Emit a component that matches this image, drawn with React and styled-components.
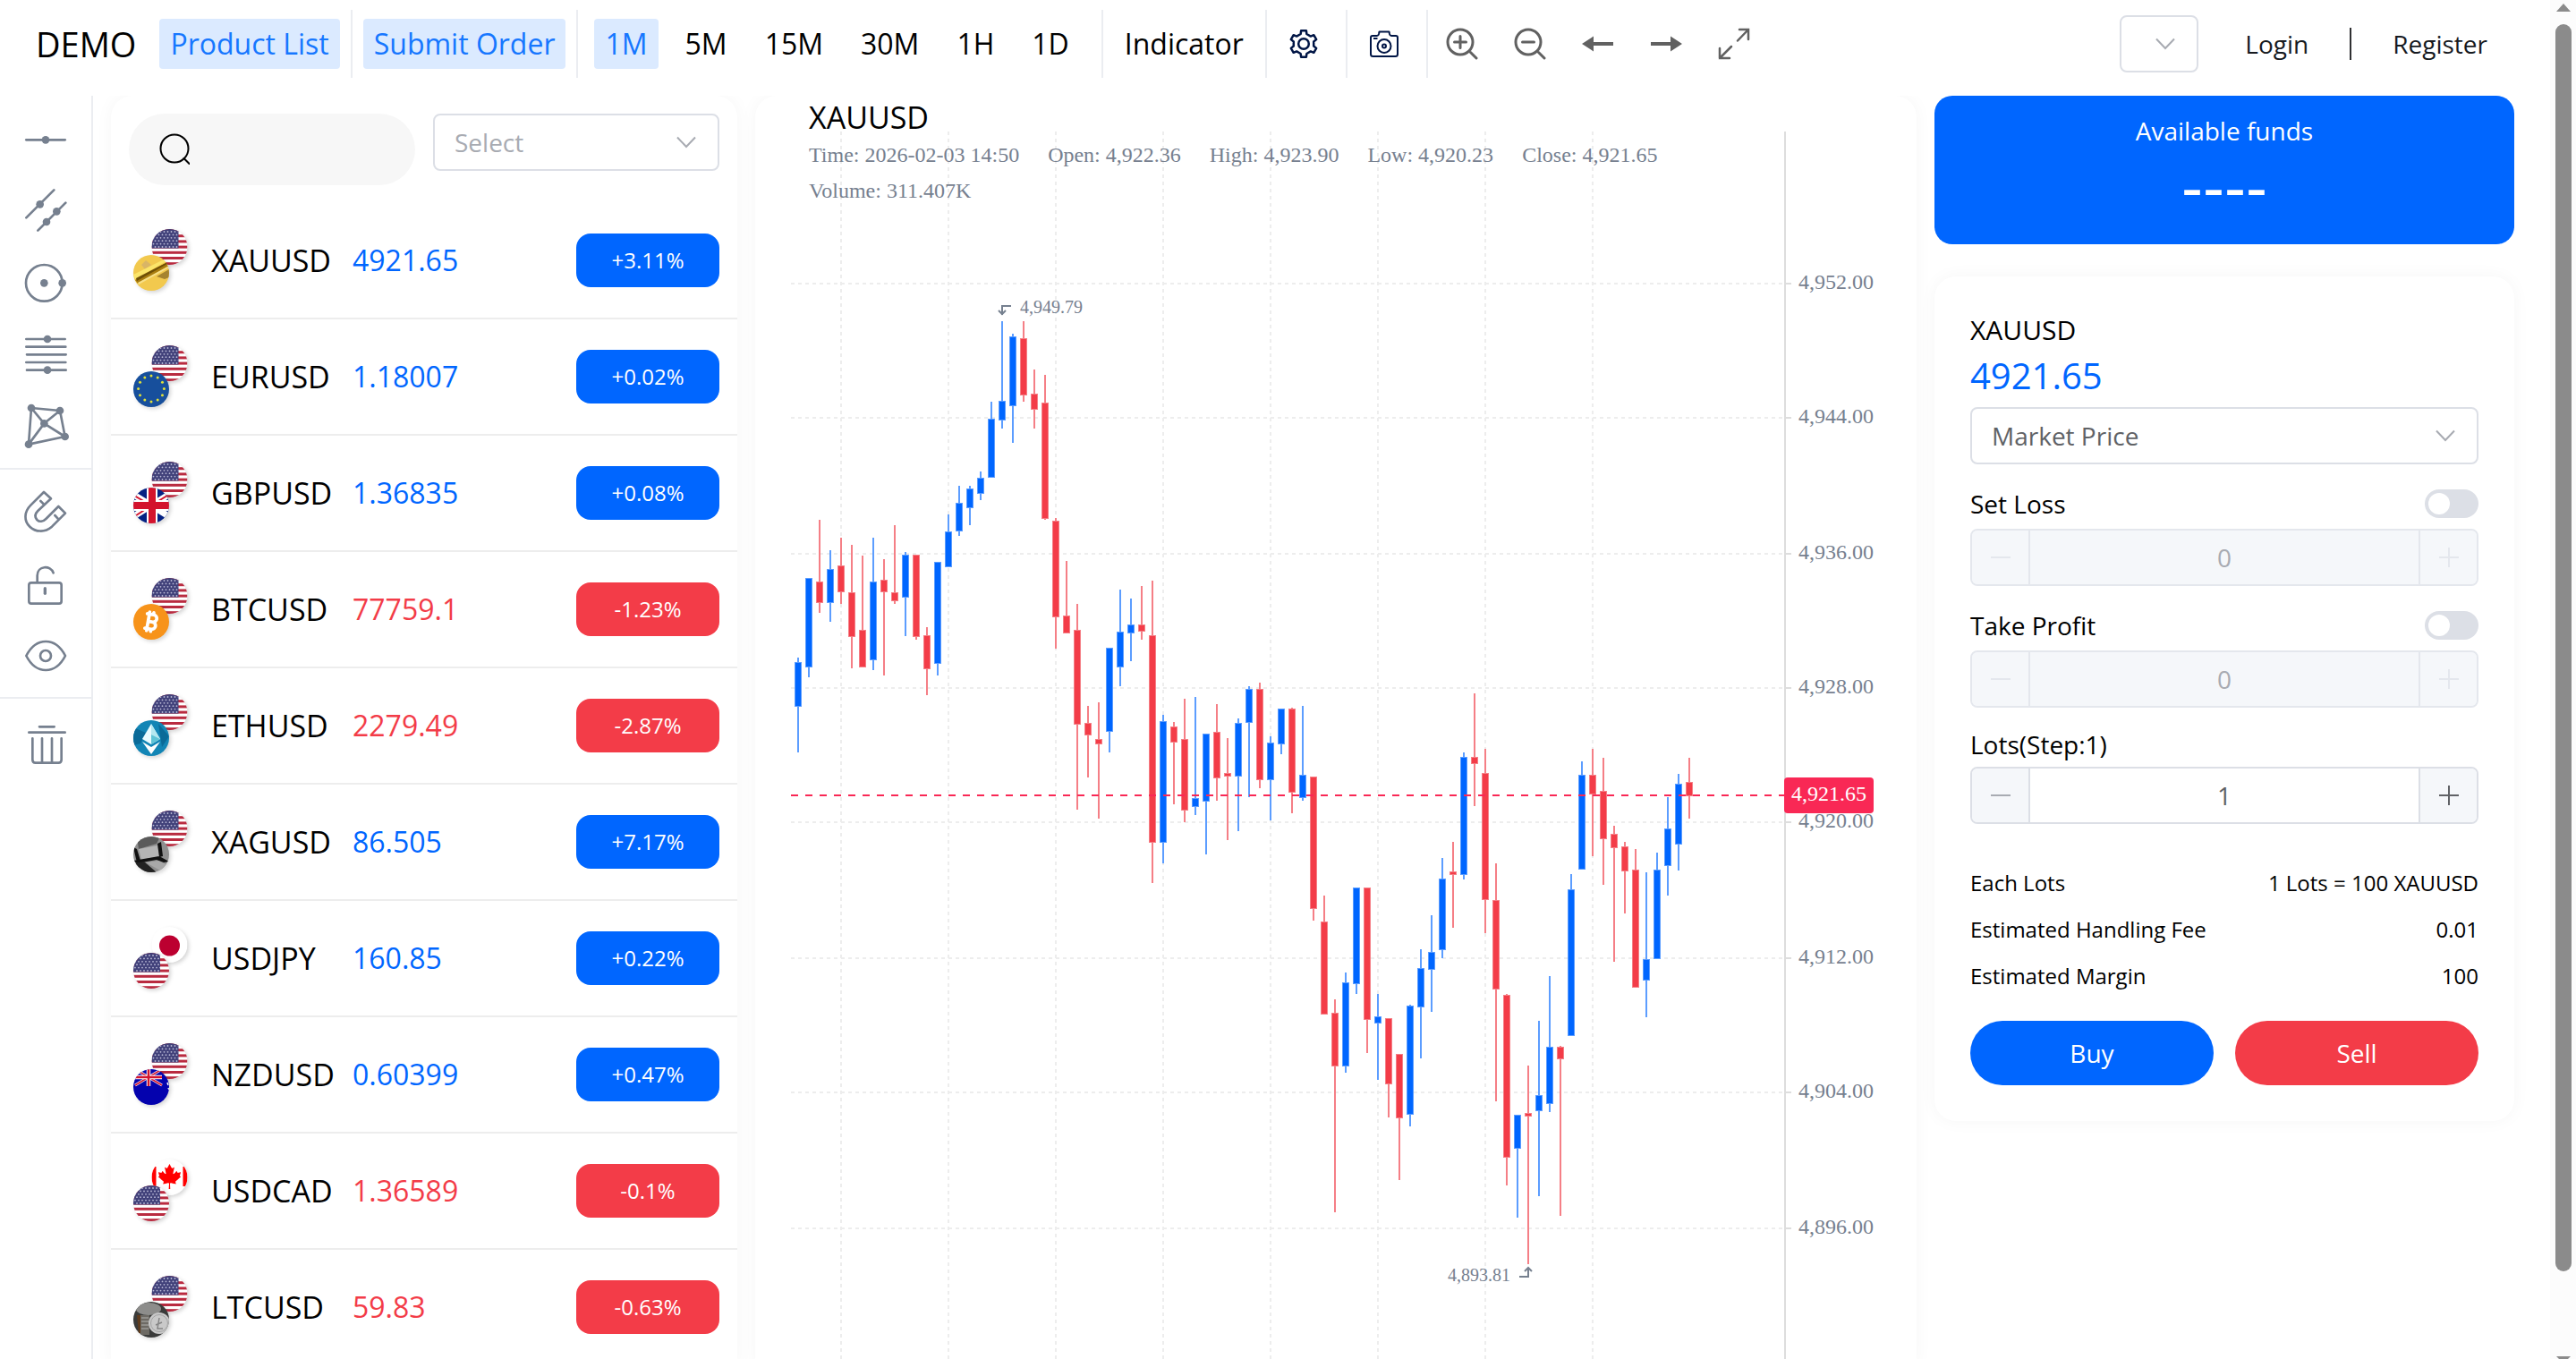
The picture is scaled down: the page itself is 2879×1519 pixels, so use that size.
import React, { useState } from 'react';
import styled, { createGlobalStyle } from 'styled-components';
import { Bitcoin } from 'lucide-react';
import { FaCanadianMapleLeaf } from 'react-icons/fa';

const blue = '#0066ff';
const red = '#f33c48';
const slate = '#76808f';

const GlobalStyle = createGlobalStyle`
  * {
    box-sizing: border-box;
  }

  body {
    margin: 0;
    background: #fff;
    color: #000;
    font-family: "Segoe UI", "Open Sans", "Noto Sans", sans-serif;
    font-size: 28px;
    line-height: 42px;
  }

  button, input, select {
    font: inherit;
    color: inherit;
    margin: 0;
  }

  button {
    border: 0;
    padding: 0;
    background: none;
    cursor: pointer;
  }

  svg {
    display: block;
  }
`;

const Shell = styled.div`
  display: flex;
  height: 100vh;
  overflow: hidden;
`;

const Page = styled.div`
  flex: 1;
  min-width: 0;
  display: flex;
  flex-direction: column;
`;

/* header */

const Header = styled.header`
  display: flex;
  align-items: center;
  flex: none;
  height: 107px;
  padding: 0 70px 10px 40px;
`;

const Brand = styled.div`
  font-size: 38px;
  margin-right: 26px;
`;

const Group = styled.div`
  display: flex;
  align-items: center;
  gap: ${props => props.$gap || 0}px;
  height: 76px;
  padding-left: ${props => props.$start || 0}px;
  padding-right: ${props => props.$end || 0}px;
  border-right: ${props => (props.$last ? 0 : '2px')} solid #ebedf1;
`;

const Tab = styled.button`
  height: 56px;
  padding: 0 12px;
  border-radius: 4px;
  font-size: 32px;
  white-space: nowrap;
  color: ${props => (props.$active ? '#1677ff' : '#000')};
  background: ${props => (props.$active ? '#dbeaff' : 'transparent')};
`;

const IconButton = styled.button`
  display: flex;
  align-items: center;
  justify-content: center;
  color: ${props => props.$color || '#616161'};
`;

const Account = styled.nav`
  display: flex;
  align-items: center;
  margin-left: auto;
  color: #171a1f;
`;

const AccountLink = styled.a`
  color: inherit;
  text-decoration: none;
`;

const AccountBar = styled.span`
  width: 2px;
  height: 36px;
  margin: 0 46px;
  background: #303133;
`;

/* selects */

const SelectWrap = styled.div`
  display: grid;
  grid-template-columns: minmax(0, 1fr);
  align-items: center;
  min-width: 0;
  width: ${props => props.$width || 'auto'};
  margin-right: ${props => props.$right || 0}px;
  color: #a8abb2;

  > * {
    grid-area: 1 / 1;
  }

  > svg {
    justify-self: end;
    margin-right: 26px;
    pointer-events: none;
  }
`;

const SelectBox = styled.select`
  appearance: none;
  width: 100%;
  height: 64px;
  padding: 0 24px 0 22px;
  border: 2px solid #dcdfe6;
  border-radius: 8px;
  background: #fff;
  color: ${props => props.$color || '#606266'};
`;

/* body */

const Body = styled.div`
  flex: 1;
  min-height: 0;
  display: flex;
  overflow: hidden;
`;

const DrawBar = styled.aside`
  flex: none;
  width: 104px;
  padding-top: 9px;
  border-right: 2px solid #ebedf1;
  color: ${slate};
`;

const DrawRule = styled.hr`
  height: 2px;
  margin: 7px 0;
  border: 0;
  background: #ebedf1;
`;

const Columns = styled.main`
  flex: 1;
  min-width: 0;
  display: grid;
  grid-template-columns: 700px minmax(0, 1fr) 648px;
  gap: 20px;
  padding: 0 40px 0 20px;
`;

const Panel = styled.section`
  border-radius: 24px 24px 0 0;
  background: #fff;
  box-shadow: 0 0 20px rgba(0, 0, 0, 0.04);
`;

const Filters = styled.div`
  display: grid;
  grid-template-columns: 1fr 1fr;
  align-items: start;
  gap: 20px;
  padding: 20px;
`;

const Search = styled.label`
  display: flex;
  align-items: center;
  gap: 16px;
  min-width: 0;
  height: 80px;
  padding: 0 32px;
  border-radius: 40px;
  background: #f7f7f7;

  input {
    flex: 1;
    min-width: 0;
    border: 0;
    outline: 0;
    background: none;
  }
`;

const List = styled.ul`
  margin: 0;
  padding: 0;
  list-style: none;
`;

const Row = styled.li`
  display: grid;
  grid-template-columns: 87px 158px 1fr 160px;
  align-items: center;
  height: 130px;
  padding: 0 20px 0 25px;
  border-bottom: 2px solid #ededed;
  font-size: 34px;
`;

const Price = styled.span`
  color: ${props => (props.$down ? red : blue)};
  font-size: 32px;
`;

const Change = styled.span`
  height: 60px;
  border-radius: 16px;
  background: ${props => (props.$down ? red : blue)};
  color: #fff;
  font-size: 24px;
  line-height: 60px;
  text-align: center;
`;

/* chart */

const ChartPanel = styled(Panel)`
  display: grid;
  grid-template-rows: 40px 1fr;
  padding-left: 40px;
  overflow: hidden;
`;

const ChartTitle = styled.h1`
  margin: 0;
  padding: 4px 20px;
  font-size: 34px;
  font-weight: 400;
  line-height: 40px;
  white-space: nowrap;
`;

const ChartStage = styled.div`
  display: grid;
  align-items: start;

  > * {
    grid-area: 1 / 1;
  }

  > svg {
    font-family: "Liberation Serif", "Times New Roman", serif;
  }
`;

const Legend = styled.div`
  display: flex;
  flex-wrap: wrap;
  column-gap: 32px;
  max-width: 1110px;
  padding: 6px 20px;
  color: ${slate};
  font: 24px/40px "Liberation Serif", "Times New Roman", serif;
`;

/* order form */

const Side = styled.div`
  min-width: 0;
`;

const Funds = styled.section`
  height: 166px;
  padding-top: 18px;
  border-radius: 20px;
  background: ${blue};
  color: #fff;
  text-align: center;
`;

const FundsValue = styled.div`
  margin-top: 4px;
  font: 72px/76px "Liberation Sans", Arial, sans-serif;
`;

const Order = styled.form`
  margin-top: 36px;
  padding: 40px;
  border-radius: 24px;
  background: #fff;
  box-shadow: 0 0 20px rgba(0, 0, 0, 0.04);
`;

const OrderName = styled.div`
  font-size: 30px;
  line-height: 40px;
`;

const OrderPrice = styled.div`
  margin-bottom: 4px;
  color: ${blue};
  font-size: 40px;
  line-height: 62px;
`;

const FieldHead = styled.div`
  display: flex;
  align-items: center;
  justify-content: space-between;
  height: ${props => (props.$plain ? 42 : 48)}px;
  margin: 20px 0 4px;
`;

const Switch = styled.input`
  appearance: none;
  width: 60px;
  height: 32px;
  padding: 4px;
  border-radius: 16px;
  background: ${props => (props.checked ? blue : '#dcdfe6')};
  cursor: pointer;

  &::before {
    content: '';
    display: block;
    width: 24px;
    height: 24px;
    margin-left: ${props => (props.checked ? 28 : 0)}px;
    border-radius: 12px;
    background: #fff;
  }
`;

const Stepper = styled.div`
  display: flex;
  height: 64px;
  border: 2px solid ${props => (props.$off ? '#e4e7ed' : '#dcdfe6')};
  border-radius: 8px;
  overflow: hidden;
  background: ${props => (props.$off ? '#f5f7fa' : '#fff')};

  input {
    flex: 1;
    min-width: 0;
    border: 2px solid ${props => (props.$off ? '#e4e7ed' : '#dcdfe6')};
    border-width: 0 2px;
    outline: 0;
    background: none;
    color: ${props => (props.$off ? '#a8abb2' : '#606266')};
    text-align: center;
  }
`;

const StepButton = styled.button`
  display: flex;
  align-items: center;
  justify-content: center;
  width: 63px;
  background: #f5f7fa;
  color: ${props => props.$color};
`;

const Facts = styled.dl`
  margin: 40px 0 24px;
  font-size: 24px;
  line-height: 52px;
`;

const Fact = styled.div`
  display: flex;
  justify-content: space-between;

  dd {
    margin: 0;
  }
`;

const Actions = styled.div`
  display: grid;
  grid-template-columns: 1fr 1fr;
  gap: 24px;
`;

const Trade = styled.button`
  height: 72px;
  border-radius: 36px;
  background: ${props => (props.$sell ? red : blue)};
  color: #fff;
`;

/* scroll rail */

const Rail = styled.div`
  flex: none;
  display: flex;
  flex-direction: column;
  align-items: center;
  width: 29px;
  padding-top: 4px;
  background: #fcfcfc;
  color: #8b8b8b;
`;

const Thumb = styled.div`
  width: 18px;
  height: 92%;
  margin: 14px 0 auto;
  border-radius: 9px;
  background: #8b8b8b;
`;

const products = [
  { name: 'XAUUSD', price: '4921.65', change: '+3.11%', top: 'us', bottom: 'gold' },
  { name: 'EURUSD', price: '1.18007', change: '+0.02%', top: 'us', bottom: 'eu' },
  { name: 'GBPUSD', price: '1.36835', change: '+0.08%', top: 'us', bottom: 'gb' },
  { name: 'BTCUSD', price: '77759.1', change: '-1.23%', top: 'us', bottom: 'btc' },
  { name: 'ETHUSD', price: '2279.49', change: '-2.87%', top: 'us', bottom: 'eth' },
  { name: 'XAGUSD', price: '86.505', change: '+7.17%', top: 'us', bottom: 'silver' },
  { name: 'USDJPY', price: '160.85', change: '+0.22%', top: 'jp', bottom: 'us' },
  { name: 'NZDUSD', price: '0.60399', change: '+0.47%', top: 'us', bottom: 'nz' },
  { name: 'USDCAD', price: '1.36589', change: '-0.1%', top: 'ca', bottom: 'us' },
  { name: 'LTCUSD', price: '59.83', change: '-0.63%', top: 'us', bottom: 'ltc' },
];

const intervals = ['1M', '5M', '15M', '30M', '1H', '1D'];

const legend = [
  'Time: 2026-02-03 14:50',
  'Open: 4,922.36',
  'High: 4,923.90',
  'Low: 4,920.23',
  'Close: 4,921.65',
  'Volume: 311.407K',
];

// up flag, then wick top, body top, body bottom, wick bottom
const candles = [
  [1, 735, 740, 790, 841], [1, 646, 646, 746, 757], [0, 581, 650, 674, 685], [1, 615, 636, 674, 695],
  [0, 601, 632, 662, 675], [0, 609, 662, 712, 747], [0, 621, 704, 746, 746], [1, 601, 650, 738, 749],
  [0, 625, 648, 662, 755], [0, 587, 662, 672, 675], [1, 617, 620, 668, 711], [0, 620, 620, 712, 715],
  [0, 701, 710, 748, 777], [1, 628, 628, 742, 755], [1, 575, 594, 634, 634], [1, 543, 562, 594, 599],
  [1, 543, 546, 568, 587], [1, 527, 534, 552, 559], [1, 449, 468, 534, 534], [1, 359, 448, 470, 479],
  [1, 373, 376, 454, 495], [0, 359, 378, 442, 449], [0, 413, 440, 458, 479], [0, 419, 450, 580, 581],
  [0, 579, 582, 690, 725], [0, 627, 688, 708, 708], [0, 675, 704, 810, 905], [0, 789, 808, 822, 869],
  [0, 785, 826, 832, 915], [1, 724, 724, 818, 841], [1, 659, 706, 746, 767], [1, 669, 698, 708, 739],
  [0, 655, 698, 706, 715], [0, 649, 710, 942, 987], [1, 799, 806, 942, 965], [0, 807, 812, 830, 899],
  [0, 781, 826, 906, 919], [1, 779, 892, 902, 911], [1, 820, 820, 896, 955], [0, 787, 818, 870, 895],
  [0, 825, 864, 868, 939], [1, 803, 808, 868, 929], [1, 767, 770, 808, 891], [0, 763, 770, 872, 881],
  [1, 823, 830, 872, 917], [1, 792, 792, 832, 843], [0, 791, 792, 886, 909], [1, 789, 866, 892, 895],
  [0, 868, 868, 1016, 1029], [0, 1001, 1030, 1134, 1134], [0, 1117, 1132, 1192, 1355], [1, 1087, 1098, 1192, 1199],
  [1, 992, 992, 1100, 1111], [0, 992, 992, 1140, 1177], [1, 1111, 1136, 1144, 1207], [0, 1138, 1138, 1212, 1249],
  [0, 1178, 1178, 1250, 1319], [1, 1123, 1124, 1246, 1259], [1, 1061, 1082, 1126, 1183], [1, 1023, 1064, 1084, 1131],
  [1, 959, 982, 1062, 1071], [0, 941, 974, 978, 1037], [1, 841, 846, 978, 983], [0, 775, 846, 854, 901],
  [0, 837, 864, 1006, 1043], [0, 965, 1006, 1106, 1231], [0, 1111, 1112, 1294, 1325], [1, 1246, 1246, 1284, 1361],
  [0, 1191, 1244, 1248, 1413], [1, 1141, 1224, 1242, 1337], [1, 1091, 1170, 1234, 1243], [0, 1169, 1170, 1184, 1359],
  [1, 977, 994, 1158, 1158], [1, 851, 866, 972, 972], [0, 837, 866, 888, 957], [0, 847, 884, 938, 989],
  [0, 923, 932, 948, 1075], [0, 941, 946, 974, 1021], [0, 949, 972, 1104, 1104], [1, 975, 1072, 1096, 1137],
  [1, 953, 972, 1072, 1072], [1, 891, 926, 968, 1001], [1, 865, 876, 944, 973], [0, 847, 874, 890, 915],
];

const priceLines = [
  [317, '4,952.00'], [467, '4,944.00'], [619, '4,936.00'], [769, '4,928.00'],
  [919, '4,920.00'], [1071, '4,912.00'], [1221, '4,904.00'], [1373, '4,896.00'],
];

const timeLines = [940, 1060, 1180, 1300, 1420, 1540, 1660, 1780];

function Chart() {
  return (
    <svg width="1216" height="1372" viewBox="884 147 1216 1372" role="img" aria-label="XAUUSD candles">
      <g stroke="#ededed" strokeWidth="2" strokeDasharray="4 4">
        {timeLines.map(x => <line key={x} x1={x} x2={x} y1="147" y2="1519" />)}
        {priceLines.map(([y]) => <line key={y} x1="884" x2="1994" y1={y} y2={y} />)}
      </g>
      <path d="M1995 147V1519" stroke="#ddd" strokeWidth="2" />
      {priceLines.map(([y, label]) => (
        <g key={y}>
          <path d={`M1996 ${y}h6`} stroke="#ddd" strokeWidth="2" />
          <text x="2010" y={y + 6} fontSize="24" fill={slate}>{label}</text>
        </g>
      ))}
      {candles.map(([up, high, top, bottom, low], i) => {
        const x = 892 + i * 12;
        const color = up ? blue : red;
        const edge = up ? '#5c9dff' : '#f57f86';
        return (
          <g key={x}>
            <path d={`M${x} ${high}V${top}M${x} ${bottom}V${low}`} stroke={edge} strokeWidth="2" />
            <rect x={x - 4} y={top} width="8" height={bottom - top} fill={edge} />
            <rect x={x - 3} y={top + 1} width="6" height={Math.max(bottom - top - 2, 2)} fill={color} />
          </g>
        );
      })}
      <path d="M884 889H1994" stroke="#f92855" strokeWidth="2" strokeDasharray="8 8" />
      <rect x="1994" y="869" width="100" height="40" rx="4" fill="#f92855" />
      <text x="2002" y="895" fontSize="24" fill="#fff">4,921.65</text>
      <g fill="none" stroke={slate} strokeWidth="2">
        <path d="M1130 342h-10v10M1116 347l4 4l4 -4" />
        <path d="M1698 1427h10v-10M1704 1421l4 -4l4 4" />
      </g>
      <text x="1140" y="350" fontSize="20" fill={slate}>4,949.79</text>
      <text x="1618" y="1432" fontSize="20" fill={slate}>4,893.81</text>
    </svg>
  );
}

function Chevron() {
  return (
    <svg width="22" height="14" viewBox="0 0 22 14" fill="none" stroke="#a8abb2" strokeWidth="2">
      <path d="M1 1.5L11 12L21 1.5" />
    </svg>
  );
}

/* every emblem is drawn on a 40 x 40 tile and cut to a circle */

function StarsAndStripes() {
  const dots = [];
  for (let r = 0; r < 6; r++) {
    for (let c = 0; c < 8; c++) {
      dots.push(<circle key={`${r}-${c}`} cx={2 + c * 4 + (r % 2) * 2} cy={3 + r * 3.4} r="0.9" />);
    }
  }
  return (
    <>
      <rect width="40" height="40" fill="#fff" />
      {[0, 1, 2, 3, 4, 5, 6].map(i => <rect key={i} y={i * 6.2} width="40" height="3" fill="#b92b40" />)}
      <rect width="30" height="21.5" fill="#41417a" />
      <g fill="#b9b9d6" clipPath="url(#canton)">{dots}</g>
    </>
  );
}

const emblems = {
  us: <StarsAndStripes />,
  gold: (
    <>
      <rect width="40" height="40" fill="#f2c94e" />
      <path d="M9 11l5-5l6 5l-7 5z" fill="#d9b566" />
      <path d="M2 28L40 7v5L5 32z" fill="#a97d10" />
      <path d="M0 22L34 5l3 2L2 27z" fill="#fbe56a" />
      <path d="M3 26L38 8v2L4 29z" fill="#6f5006" />
      <path d="M5 31L40 12v2L6 33z" fill="#f7e08a" />
      <path d="M26 24l14-8v9l-5 2z" fill="#a5832e" />
    </>
  ),
  eu: (
    <>
      <rect width="40" height="40" fill="#174f9c" />
      {Array.from({ length: 12 }, (_, i) => {
        const a = (i * Math.PI) / 6;
        return <circle key={i} cx={20 + 14.4 * Math.sin(a)} cy={19.5 - 14.4 * Math.cos(a)} r="1.5" fill="#dfe038" />;
      })}
    </>
  ),
  gb: (
    <>
      <rect width="40" height="40" fill="#052283" />
      <path d="M-6 4L46 36M-6 36L46 4" stroke="#fff" strokeWidth="7" />
      <path d="M-6 5L20 20M46 4L20 20M-6 37L20 20" stroke="#d3132d" strokeWidth="2" />
      <path d="M21 0V40M0 20H40" stroke="#fff" strokeWidth="12" />
      <path d="M21 0V40M0 20H40" stroke="#d3132d" strokeWidth="8" />
    </>
  ),
  btc: (
    <>
      <rect width="40" height="40" fill="#f7931a" />
      <Bitcoin x={6} y={6} size={28} color="#fff" strokeWidth={3.2} />
    </>
  ),
  eth: (
    <>
      <rect width="40" height="40" fill="#1285b5" />
      <path d="M0 8l14 6l-6 12l-8 2zM28 4l12 14l-8 12z" fill="#0a6a98" />
      <path d="M20 4L30 21L20 27L10 21z" fill="#e9fbff" />
      <path d="M20 4L30 21L20 16z" fill="#b4e8f0" />
      <path d="M20 16L30 21L20 27z" fill="#5fc4d6" />
      <path d="M10 24L20 30L30 24L20 38z" fill="#fff" />
    </>
  ),
  silver: (
    <>
      <rect width="40" height="40" fill="#8f8f8f" />
      <path d="M4 0H30L26 8L6 14z" fill="#5a5a5a" />
      <path d="M6 14L27 10L29 22L9 26z" fill="#b5b5b5" />
      <path d="M0 12L4 14L8 27L4 29zM27 8l4-2l2 16l-4 1zM0 27L29 22L40 28L34 29L26 26L4 30z" fill="#111" />
      <path d="M0 30L12 28L26 40H14z" fill="#222" />
      <path d="M14 29L28 27L38 32L30 38z" fill="#a8a8a8" />
    </>
  ),
  jp: (
    <>
      <rect width="40" height="40" fill="#fff" />
      <circle cx="20" cy="21" r="11.5" fill="#bc0030" />
    </>
  ),
  nz: (
    <>
      <rect width="40" height="40" fill="#0402ae" />
      <path d="M2 0L32 18M32 0L2 18" stroke="#fff" strokeWidth="3" />
      <path d="M2 0L32 18M32 0L2 18" stroke="#d3132d" strokeWidth="1.5" />
      <path d="M17 0V19M2 9H32" stroke="#fff" strokeWidth="4.5" />
      <path d="M17 0V19M2 9H32" stroke="#d3132d" strokeWidth="2.5" />
      <path d="M38 15l1 3M39 21l1 2" stroke="#fff" strokeWidth="1.5" />
    </>
  ),
  ca: (
    <>
      <rect width="40" height="40" fill="#fff" />
      <rect width="5" y="8" height="22" fill="#f00" />
      <rect x="35" y="8" width="5" height="22" fill="#f00" />
      <FaCanadianMapleLeaf x={6} y={5} size={28} color="#f00" />
    </>
  ),
  ltc: (
    <>
      <rect width="40" height="40" fill="#3a3b3a" />
      <ellipse cx="17" cy="8" rx="14" ry="7" fill="#8d8d8b" />
      <path d="M5 15H18V37H8z" fill="#6d6a64" />
      <path d="M4 15h4v20H6z" fill="#5f3c1d" />
      <path d="M9 18h8M9 22h8M9 26h8M9 30h8" stroke="#b3b3b0" />
      <circle cx="29" cy="24" r="12" fill="#c9c9c9" />
      <circle cx="29" cy="24" r="9.5" fill="none" stroke="#a3a3a3" />
      <path d="M29 18l-2 12h6M25 26l7-3" fill="none" stroke="#858585" strokeWidth="1.5" />
    </>
  ),
};

const Emblems = styled.svg`
  overflow: visible;

  > g {
    filter: drop-shadow(2px 2px 2px rgba(0, 0, 0, 0.16));
  }
`;

function PairIcon({ top, bottom }) {
  return (
    <Emblems width="61" height="70" viewBox="0 0 61 70" aria-hidden="true">
      <defs>
        <clipPath id="disc"><circle cx="20" cy="20" r="20" /></clipPath>
        <clipPath id="canton"><rect width="30" height="21.5" /></clipPath>
      </defs>
      <g transform="translate(20.5 0)"><g clipPath="url(#disc)">{emblems[top]}</g></g>
      <g transform="translate(0 29)"><g clipPath="url(#disc)">{emblems[bottom]}</g></g>
    </Emblems>
  );
}

/* drawing tools share one 240 unit grid, three units to the pixel */

function Tool({ label, cy, children }) {
  return (
    <IconButton type="button" aria-label={label} $color="inherit">
      <svg width="102" height="80" viewBox={`0 ${cy - 120} 306 240`} fill="none" stroke="currentColor" strokeWidth="8" strokeLinecap="round" strokeLinejoin="round">
        {children}
      </svg>
    </IconButton>
  );
}

function Dot({ x, y }) {
  return <circle cx={x} cy={y} r="13" fill="currentColor" stroke="none" />;
}

function DrawingTools() {
  return (
    <DrawBar>
      <Tool label="Horizontal line" cy={168}>
        <path d="M88 169H218" /><Dot x={153} y={169} />
      </Tool>
      <Tool label="Parallel lines" cy={408}>
        <path d="M88 430L181 337M127 473L220 380" />
        <Dot x={134} y={385} /><Dot x={190} y={409} /><Dot x={156} y={444} />
      </Tool>
      <Tool label="Circle" cy={648}>
        <circle cx="148" cy="649" r="61" /><Dot x={148} y={649} /><Dot x={209} y={649} />
      </Tool>
      <Tool label="Fibonacci" cy={888}>
        <path d="M88 837H218M88 863H220M90 889H221M88 915H220M90 941H221" />
        <Dot x={159} y={837} /><Dot x={159} y={941} />
      </Tool>
      <Tool label="Pattern" cy={1128}>
        <path d="M105 1068L201 1077L218 1164L96 1190ZM105 1068L148 1120L218 1164M201 1077L148 1120L96 1190" />
        <Dot x={105} y={1068} /><Dot x={201} y={1077} /><Dot x={218} y={1164} /><Dot x={96} y={1190} /><Dot x={148} y={1120} />
      </Tool>
      <DrawRule />
      <Tool label="Magnet" cy={216}>
        <path d="M147 150L103 194C80 217 80 247 100 266C120 285 150 286 174 266L219 221L196 198L154 240C144 250 132 251 124 243C116 234 117 223 127 213L171 172Z" />
        <path d="M136 180L147 191M184 228L194 239" />
      </Tool>
      <Tool label="Lock" cy={456}>
        <rect x="97" y="454" width="109" height="70" rx="8" />
        <path d="M125 450V430C125 396 170 394 179 421" />
        <path d="M151 473V490" strokeWidth="10" />
      </Tool>
      <Tool label="Show" cy={696}>
        <path d="M88 699C121 635 186 635 219 699C186 763 121 763 88 699Z" />
        <circle cx="153" cy="699" r="18" />
      </Tool>
      <DrawRule />
      <Tool label="Remove" cy={984}>
        <path d="M132 937H182M97 956H218M109 976V1048Q109 1058 119 1058H196Q206 1058 206 1048V976M141 976V1056M174 976V1056" />
      </Tool>
    </DrawBar>
  );
}

function gearPath() {
  const at = (deg, r) => {
    const a = (deg * Math.PI) / 180;
    return `${(17 + r * Math.cos(a)).toFixed(2)} ${(17 + r * Math.sin(a)).toFixed(2)}`;
  };
  const points = [];
  for (let k = 0; k < 6; k++) {
    const a = -90 + k * 60;
    points.push(at(a - 11, 15), at(a + 11, 15), at(a + 17, 11.5), at(a + 43, 11.5));
  }
  return `M${points.join('L')}Z`;
}

function TopBar() {
  const [interval, setInterval] = useState('1M');
  return (
    <Header>
      <Brand>DEMO</Brand>
      <Group $end={12}><Tab type="button" $active>Product List</Tab></Group>
      <Group $start={12} $end={12}><Tab type="button" $active>Submit Order</Tab></Group>
      <Group $start={18} $end={24} $gap={18}>
        {intervals.map(item => (
          <Tab key={item} type="button" $active={item === interval} onClick={() => setInterval(item)}>{item}</Tab>
        ))}
      </Group>
      <Group $start={12} $end={12}><Tab type="button">Indicator</Tab></Group>
      <Group $start={24} $end={30}>
        <IconButton type="button" aria-label="Settings" $color="#001545">
          <svg width="34" height="34" viewBox="0 0 34 34" fill="none" stroke="currentColor" strokeWidth="2.5" strokeLinejoin="round">
            <path d={gearPath()} /><circle cx="17" cy="17" r="5.8" />
          </svg>
        </IconButton>
      </Group>
      <Group $start={24} $end={30}>
        <IconButton type="button" aria-label="Screenshot" $color="#001545">
          <svg width="34" height="34" viewBox="0 0 34 34" fill="none" stroke="currentColor" strokeWidth="2" strokeLinejoin="round">
            <path d="M4 8H9Q10.500 8 11 6L11.500 3.500H22.500L23 6Q23.500 8 25 8H30Q32 8 32 10V28.500Q32 31 29.500 31H4.500Q2 31 2 28.500V10Q2 8 4 8Z" />
            <circle cx="17" cy="19.500" r="7.500" /><circle cx="17" cy="19.500" r="2" /><path d="M5 11H9.500" />
          </svg>
        </IconButton>
      </Group>
      <Group $start={20} $gap={40} $last>
        <IconButton type="button" aria-label="Zoom in">
          <svg width="36" height="36" viewBox="0 0 36 36" fill="none" stroke="currentColor" strokeWidth="3" strokeLinecap="round">
            <circle cx="16" cy="16" r="14" /><path d="M9.500 16H22.500M16 9.500V22.500M27.500 27.500L34 34" />
          </svg>
        </IconButton>
        <IconButton type="button" aria-label="Zoom out">
          <svg width="36" height="36" viewBox="0 0 36 36" fill="none" stroke="currentColor" strokeWidth="3" strokeLinecap="round">
            <circle cx="16" cy="16" r="14" /><path d="M9.500 16H22.500M27.500 27.500L34 34" />
          </svg>
        </IconButton>
        <IconButton type="button" aria-label="Back">
          <svg width="36" height="36" viewBox="0 0 36 36" fill="currentColor">
            <path d="M0 18L13 9.500V16H35V20H13V26.500Z" />
          </svg>
        </IconButton>
        <IconButton type="button" aria-label="Forward">
          <svg width="36" height="36" viewBox="0 0 36 36" fill="currentColor">
            <path d="M36 18L23 9.500V16H1V20H23V26.500Z" />
          </svg>
        </IconButton>
        <IconButton type="button" aria-label="Full screen">
          <svg width="36" height="36" viewBox="0 0 36 36" fill="none" stroke="currentColor" strokeWidth="2.5" strokeLinecap="round">
            <path d="M22 14.500L34 2M24 2H34V13M15 21L2 34M2 23V34H13" />
          </svg>
        </IconButton>
      </Group>
      <Account>
        <SelectWrap $width="88px" $right={52}>
          <SelectBox aria-label="Language"><option value="" /></SelectBox>
          <Chevron />
        </SelectWrap>
        <AccountLink href="#login">Login</AccountLink>
        <AccountBar />
        <AccountLink href="#register">Register</AccountLink>
      </Account>
    </Header>
  );
}

function ProductList() {
  return (
    <Panel>
      <Filters>
        <Search>
          <svg width="36" height="36" viewBox="0 0 36 36" fill="none" stroke="#000" strokeWidth="2">
            <circle cx="19" cy="17" r="15.500" /><path d="M29.500 28L35.500 34" strokeLinecap="round" />
          </svg>
          <input type="text" aria-label="Search" />
        </Search>
        <SelectWrap>
          <SelectBox $color="#a8abb2" aria-label="Category"><option>Select</option></SelectBox>
          <Chevron />
        </SelectWrap>
      </Filters>
      <List>
        {products.map(item => {
          const down = item.change.startsWith('-');
          return (
            <Row key={item.name}>
              <PairIcon top={item.top} bottom={item.bottom} />
              <span>{item.name}</span>
              <Price $down={down}>{item.price}</Price>
              <Change $down={down}>{item.change}</Change>
            </Row>
          );
        })}
      </List>
    </Panel>
  );
}

function NumberField({ id, value, off, onChange }) {
  const faint = '#e4e7ed';
  return (
    <Stepper $off={off}>
      <StepButton type="button" aria-label="Decrease" disabled={off} $color={off ? faint : '#a8abb2'} onClick={() => onChange(Math.max(1, value - 1))}>
        <svg width="22" height="22" viewBox="0 0 22 22" stroke="currentColor" strokeWidth="2"><path d="M0 11H22" /></svg>
      </StepButton>
      <input id={id} type="text" value={value} disabled={off} onChange={e => onChange(Number(e.target.value) || 0)} />
      <StepButton type="button" aria-label="Increase" disabled={off} $color={off ? faint : '#606266'} onClick={() => onChange(value + 1)}>
        <svg width="22" height="22" viewBox="0 0 22 22" stroke="currentColor" strokeWidth="2"><path d="M0 11H22M11 0V22" /></svg>
      </StepButton>
    </Stepper>
  );
}

function SwitchField({ id, label }) {
  const [on, setOn] = useState(false);
  const [value, setValue] = useState(0);
  return (
    <>
      <FieldHead>
        <label htmlFor={id}>{label}</label>
        <Switch type="checkbox" role="switch" aria-label={`${label} on`} checked={on} onChange={e => setOn(e.target.checked)} />
      </FieldHead>
      <NumberField id={id} value={value} off={!on} onChange={setValue} />
    </>
  );
}

function OrderForm() {
  const [lots, setLots] = useState(1);
  return (
    <Order onSubmit={e => e.preventDefault()}>
      <OrderName>XAUUSD</OrderName>
      <OrderPrice>4921.65</OrderPrice>
      <SelectWrap>
        <SelectBox aria-label="Order type"><option>Market Price</option></SelectBox>
        <Chevron />
      </SelectWrap>
      <SwitchField id="loss" label="Set Loss" />
      <SwitchField id="profit" label="Take Profit" />
      <FieldHead $plain><label htmlFor="lots">Lots(Step:1)</label></FieldHead>
      <NumberField id="lots" value={lots} onChange={setLots} />
      <Facts>
        <Fact><dt>Each Lots</dt><dd>1 Lots = 100 XAUUSD</dd></Fact>
        <Fact><dt>Estimated Handling Fee</dt><dd>0.01</dd></Fact>
        <Fact><dt>Estimated Margin</dt><dd>100</dd></Fact>
      </Facts>
      <Actions>
        <Trade type="submit">Buy</Trade>
        <Trade type="submit" $sell>Sell</Trade>
      </Actions>
    </Order>
  );
}

export default function App() {
  return (
    <Shell>
      <GlobalStyle />
      <Page>
        <TopBar />
        <Body>
          <DrawingTools />
          <Columns>
            <ProductList />
            <ChartPanel>
              <ChartTitle>XAUUSD</ChartTitle>
              <ChartStage>
                <Chart />
                <Legend>{legend.map(item => <span key={item}>{item}</span>)}</Legend>
              </ChartStage>
            </ChartPanel>
            <Side>
              <Funds>
                <div>Available funds</div>
                <FundsValue>----</FundsValue>
              </Funds>
              <OrderForm />
            </Side>
          </Columns>
        </Body>
      </Page>
      <Rail aria-hidden="true">
        <svg width="18" height="9" viewBox="0 0 18 9" fill="currentColor"><path d="M9 0L17 9H1Z" /></svg>
        <Thumb />
        <svg width="18" height="3" viewBox="0 0 18 3" fill="currentColor"><path d="M1 0H17L14 3H4Z" /></svg>
      </Rail>
    </Shell>
  );
}
